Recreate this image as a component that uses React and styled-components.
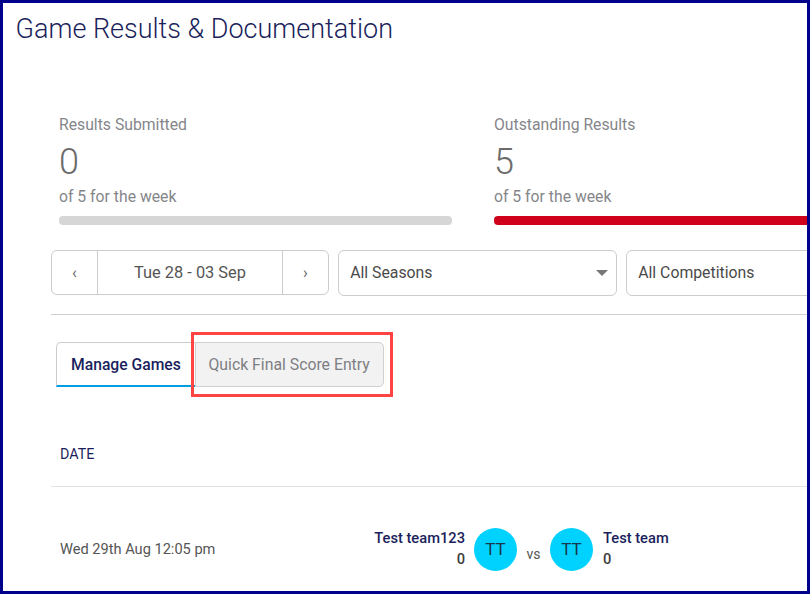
import React from "react";
import styled, { createGlobalStyle } from "styled-components";

const Global = createGlobalStyle`
  html, body { margin: 0; padding: 0; background: #fff; }
  * { box-sizing: border-box; }
  body { font-family: Roboto, "Liberation Sans", sans-serif; }
`;

const Frame = styled.div`
  width: 810px;
  height: 594px;
  border: 3px solid #00008b;
  overflow: hidden;
  background: #fff;
  padding-top: 9px;
`;

const Title = styled.h1`
  margin: 0 0 0 12.5px;
  font-size: 27px;
  line-height: 34px;
  font-weight: 300;
  color: #1b1f5c;
  white-space: nowrap;
`;

const Stats = styled.div`
  display: flex;
  gap: 42px;
  margin: 69px 0 0 56px;
  width: 900px;
`;

const Stat = styled.div`
  flex: 0 0 393px;
`;

const StatLabel = styled.div`
  font-size: 15.75px;
  line-height: 20px;
  color: #85868a;
`;

const StatValue = styled.div`
  font-size: 36px;
  font-weight: 300;
  line-height: 42px;
  margin-top: 6px;
  color: #6b6b6b;
`;

const StatNote = styled.div`
  font-size: 15.75px;
  line-height: 20px;
  margin-top: 4px;
  color: #85868a;
`;

const Bar = styled.div`
  height: 9px;
  margin-top: 9px;
  border-radius: 4px;
  background: ${(p) => p.$color};
`;

const Filters = styled.div`
  display: flex;
  gap: 9px;
  margin: 25px 0 0 48px;
  width: 900px;
`;

const Pager = styled.div`
  display: flex;
  flex: 0 0 278px;
  height: 45px;
  border: 1px solid #ccc;
  border-radius: 6px;
  color: #555;
`;

const PagerArrow = styled.div`
  flex: 0 0 ${(p) => p.$w}px;
  display: flex;
  align-items: center;
  justify-content: center;
  font-size: 16px;
  color: #666;
  ${(p) => p.$divider && `border-${p.$divider}: 1px solid #ccc;`}
`;

const PagerDate = styled.div`
  flex: 1;
  display: flex;
  align-items: center;
  justify-content: center;
  font-size: 16.4px;
  color: #555;
`;

const Select = styled.div`
  flex: 0 0 ${(p) => p.$w}px;
  height: 46px;
  display: flex;
  align-items: center;
  justify-content: space-between;
  padding: 0 8px 2px 11.2px;
  border: 1px solid #ccc;
  border-radius: 6px;
  font-size: 15.8px;
  color: #4a4a4a;
`;

const Caret = styled.span`
  width: 0;
  height: 0;
  margin-top: 2px;
  border-left: 6px solid transparent;
  border-right: 6px solid transparent;
  border-top: 6px solid #777;
`;

const Rule = styled.div`
  height: 1px;
  margin: ${(p) => p.$top}px 0 0 48px;
  width: 800px;
  background: ${(p) => p.$color};
`;

const Tabs = styled.div`
  display: flex;
  margin: 27px 0 0 53px;
`;

const ActiveTab = styled.div`
  width: 139px;
  height: 45px;
  display: flex;
  align-items: center;
  padding-left: 14px;
  border: 1px solid #ccc;
  border-bottom: 2px solid #009fe3;
  border-right: 0;
  border-radius: 5px 0 0 0;
  font-size: 15.7px;
  font-weight: 500;
  color: #1b1f5c;
`;

const Tab = styled.div`
  position: relative;
  width: 189px;
  height: 45px;
  display: flex;
  align-items: center;
  padding-left: 12.5px;
  background: #f2f2f2;
  border: 1px solid #d0d0d0;
  border-radius: 0 5px 5px 0;
  font-size: 15.8px;
  color: #7d7e83;
`;

const Highlight = styled.div`
  position: absolute;
  left: -5px;
  top: -11px;
  width: 202px;
  height: 65px;
  border: 3px solid #ff4444;
`;

const TableHead = styled.div`
  margin: 57px 0 0 57px;
  font-size: 14.3px;
  line-height: 20px;
  color: #1b1f5c;
`;

const Row = styled.div`
  display: flex;
  align-items: center;
  margin: 41px 0 0 57px;
`;

const DateCell = styled.div`
  flex: 0 0 280px;
  font-size: 14.6px;
  color: #555;
  padding-bottom: 1px;
`;

const Team = styled.div`
  flex: 0 0 ${(p) => p.$w}px;
  text-align: ${(p) => p.$align};
  font-size: 14.7px;
  line-height: 21px;
  font-weight: 500;
  padding-bottom: 1px;
`;

const TeamName = styled.div`
  color: #1b1f5c;
`;

const Score = styled.div`
  color: #3d3d3d;
`;

const Avatar = styled.div`
  flex: 0 0 43px;
  height: 43px;
  margin: ${(p) => p.$m};
  padding-bottom: 2px;
  border-radius: 50%;
  display: flex;
  align-items: center;
  justify-content: center;
  background: #00d2ff;
  color: #16384a;
  font-size: 17px;
`;

const Versus = styled.div`
  flex: 0 0 33px;
  text-align: center;
  font-size: 14px;
  color: #555;
  padding-top: 9px;
`;

export default function App() {
  return (
    <Frame>
      <Global />
      <Title>Game Results &amp; Documentation</Title>
      <Stats>
        <Stat>
          <StatLabel>Results Submitted</StatLabel>
          <StatValue>0</StatValue>
          <StatNote>of 5 for the week</StatNote>
          <Bar $color="#d6d6d6" />
        </Stat>
        <Stat>
          <StatLabel>Outstanding Results</StatLabel>
          <StatValue>5</StatValue>
          <StatNote>of 5 for the week</StatNote>
          <Bar $color="#d0021b" />
        </Stat>
      </Stats>
      <Filters>
        <Pager>
          <PagerArrow $w={46} $divider="right">‹</PagerArrow>
          <PagerDate>Tue 28 - 03 Sep</PagerDate>
          <PagerArrow $w={46} $divider="left">›</PagerArrow>
        </Pager>
        <Select $w={279}>
          All Seasons
          <Caret />
        </Select>
        <Select $w={279}>All Competitions</Select>
      </Filters>
      <Rule $top={18} $color="#d0d0d0" />
      <Tabs>
        <ActiveTab>Manage Games</ActiveTab>
        <Tab>
          Quick Final Score Entry
          <Highlight />
        </Tab>
      </Tabs>
      <TableHead>DATE</TableHead>
      <Rule $top={22} $color="#e2e2e2" />
      <Row>
        <DateCell>Wed 29th Aug 12:05 pm</DateCell>
        <Team $w={125} $align="right">
          <TeamName>Test team123</TeamName>
          <Score>0</Score>
        </Team>
        <Avatar $m="0 0 0 9px">TT</Avatar>
        <Versus>vs</Versus>
        <Avatar $m="0 10px 0 0">TT</Avatar>
        <Team $w={100} $align="left">
          <TeamName>Test team</TeamName>
          <Score>0</Score>
        </Team>
      </Row>
    </Frame>
  );
}
